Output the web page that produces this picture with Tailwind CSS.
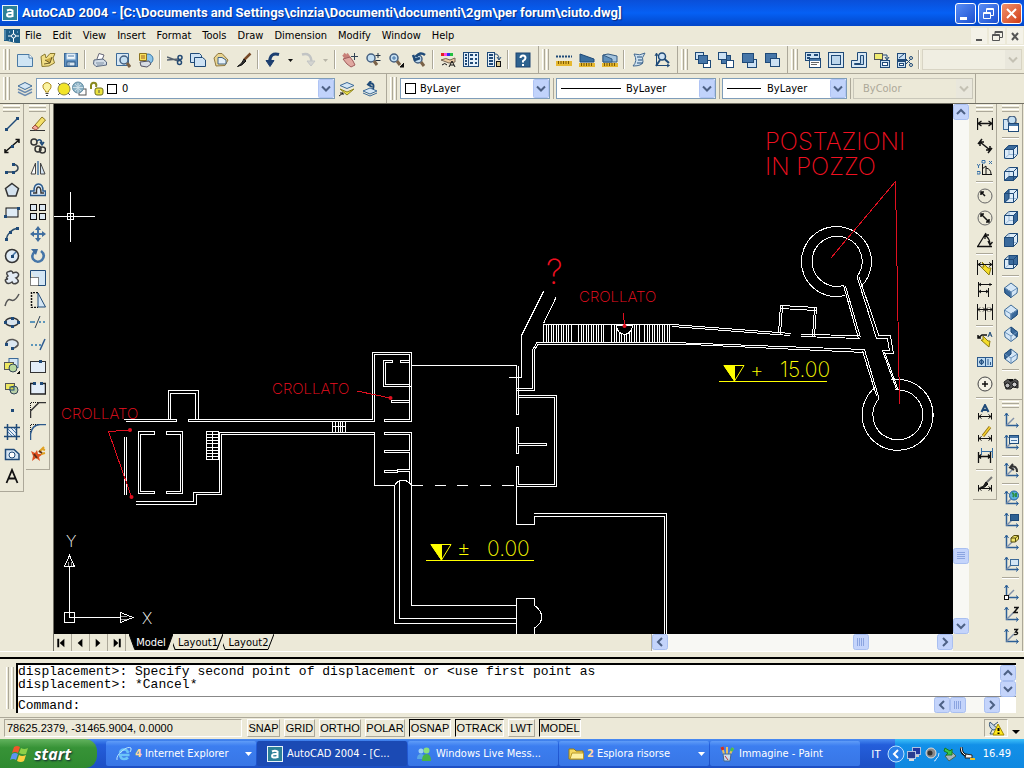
<!DOCTYPE html>
<html lang="en">
<head>
<meta charset="utf-8">
<title>AutoCAD 2004</title>
<script src="https://cdn.jsdelivr.net/npm/@tailwindcss/browser@4"></script>
</head>
<body class="h-screen overflow-hidden flex flex-col bg-[#ece9d8] text-black text-[11px] leading-4 font-['DejaVu_Sans_Condensed','DejaVu_Sans',sans-serif] cursor-default">

<!-- title bar -->
<header class="h-[26px] shrink-0 flex items-center pl-[2px] pr-[2px] bg-linear-to-b from-[#0a4fd8] via-[#0560f5] to-[#0346c8] text-white">
  <svg class="size-4 shrink-0" viewBox="0 0 16 16"><rect width="16" height="16" fill="#e8f4fa"/><rect x="1" y="1" width="14" height="14" fill="#2c8097"/><path d="M5 5.500Q8 4 10.500 5.500V12M10.500 8Q5 7.500 5 10T10.500 11" fill="none" stroke="#fff" stroke-width="2"/></svg>
  <h1 class="grow pl-1 font-bold text-[13px] whitespace-nowrap [text-shadow:1px_1px_1px_#0a2a80] font-[Roboto,sans-serif]" id="title">AutoCAD 2004 - [C:\Documents and Settings\cinzia\Documenti\documenti\2gm\per forum\ciuto.dwg]</h1>
  <div class="flex gap-[2px]">
    <button aria-label="Minimize" class="w-[21px] h-[21px] rounded-[3px] border border-white bg-linear-to-br from-[#5a8df5] to-[#1c4fd0]"><svg class="size-full" viewBox="0 0 19 19"><rect x="4" y="13" width="7" height="3" fill="#fff"/></svg></button>
    <button aria-label="Restore" class="w-[21px] h-[21px] rounded-[3px] border border-white bg-linear-to-br from-[#5a8df5] to-[#1c4fd0]"><svg class="size-full" viewBox="0 0 19 19" fill="none" stroke="#fff"><path d="M7.500 8V4.500H14.500V11.500H12M7 5.500H15"/><path d="M4.500 8.500H11.500V14.500H4.500ZM4 9.500H12"/></svg></button>
    <button aria-label="Close" class="w-[21px] h-[21px] rounded-[3px] border border-white bg-linear-to-br from-[#f0906a] to-[#d03a10]"><svg class="size-full" viewBox="0 0 19 19"><path d="M5 5L14 14M14 5L5 14" stroke="#fff" stroke-width="2"/></svg></button>
  </div>
</header>

<!-- menu bar -->
<nav class="h-[19px] shrink-0 flex items-center pl-1">
  <svg class="size-4 shrink-0 mr-[1px]" viewBox="0 0 16 16"><path d="M0 1H3V13H0ZM3 1H16V15L12 15L3 13Z" fill="#1d5c86"/><path d="M9.500 2V14M4 8H15" stroke="#fff"/><circle cx="9.500" cy="8" r="2" fill="#1d5c86" stroke="#fff"/><path d="M5 4H6M13 4H14M5 12H6" stroke="#9fd0f0"/><path d="M1 2V12" stroke="#7fb0d0"/></svg>
  <div class="flex gap-[3px] grow">
    <button class="px-1">File</button><button class="px-1">Edit</button><button class="px-1">View</button><button class="px-1">Insert</button><button class="px-1">Format</button><button class="px-1">Tools</button><button class="px-1">Draw</button><button class="px-1">Dimension</button><button class="px-1">Modify</button><button class="px-1">Window</button><button class="px-1">Help</button>
  </div>
  <div class="flex gap-[2px] pr-[1px]">
    <button aria-label="Minimize drawing" class="w-4 h-4 bg-[#f4f2e8]"><svg viewBox="0 0 16 16"><path d="M5 12H11" stroke="#555" stroke-width="2"/></svg></button>
    <button aria-label="Restore drawing" class="w-4 h-4 bg-[#f4f2e8]"><svg viewBox="0 0 16 16" fill="none" stroke="#555"><path d="M6 6.500V3.500H13.500V9.500H11M6 4.500H13M3.500 6.500H10.500V12.500H3.500ZM3 7.500H11"/></svg></button>
    <button aria-label="Close drawing" class="w-4 h-4 bg-[#f4f2e8]"><svg viewBox="0 0 16 16"><path d="M5 5L11 12M11 5L5 12" stroke="#555" stroke-width="2"/></svg></button>
  </div>
</nav>

<!-- toolbar row 1 -->
<div class="h-[28px] shrink-0 flex items-stretch border-t border-white">
  <div data-bar="h" data-icons="new open save | print preview publish | cut copy paste match | undo dd redo ddg | pan zoomrt zoomwin zoomprev | props dcenter palettes | help"></div>
  <div data-bar="h" data-icons="dist area mass | list locate"></div>
  <div data-bar="h" data-icons="front back above under"></div>
  <div data-bar="g" data-icons="vpdlg vpone vppoly vpobj vpclip |"></div>
  <label class="relative flex items-center grow pr-[2px]"><select disabled aria-label="Viewport scale" class="appearance-none w-full h-[21px] border border-[#d8d4c4] bg-[#f0eee2]"><option></option></select>
    <svg class="absolute right-[3px] w-4 h-[19px] pointer-events-none" viewBox="0 0 16 19"><rect width="16" height="19" fill="#e9e7dc"/><path d="M4 7.500L8 11.500L12 7.500" fill="none" stroke="#c4c1b4" stroke-width="2"/></svg></label>
</div>

<!-- toolbar row 2 -->
<div class="h-[30px] shrink-0 flex items-stretch border-t border-[#aca899]">
  <div data-bar="g" data-icons="layers"></div>
  <label class="relative flex items-center w-[299px]">
    <select aria-label="Layer" class="appearance-none w-full h-[21px] pl-[85px] border border-[#7f9db9] bg-white"><option>0</option></select>
    <svg class="absolute left-[3px] w-[80px] h-4 pointer-events-none" viewBox="0 0 80 16"><g fill="none"><path d="M6.500 11V10Q3 7 4 4Q8 -1 12 4Q13 7 9.500 10V11Z" fill="#fbf3a0" stroke="#b09020"/><path d="M6.500 12.500H9.500M7 14.500H9" stroke="#444"/><circle cx="25" cy="8" r="6" fill="#f2e428" stroke="#908a40"/><path d="M19 2L21 4M31 2L29 4M19 14L21 12M31 14L29 12" stroke="#555"/><rect x="40" y="8" width="7" height="6" fill="#fff" stroke="#555"/><circle cx="39" cy="6.500" r="5.500" fill="#8ab0c4" stroke="#6890a4"/><path d="M34 6.500H44M39 2V12M36 3L42 10M42 3L36 10" stroke="#cfe0e8"/><path d="M52 8V4Q53 1 56 2Q58 3 57 6" stroke="#8a8a20" stroke-width="2"/><rect x="56" y="7" width="8" height="7" rx="2" fill="#ece440" stroke="#6c6c20"/><path d="M60 9V12" stroke="#555"/></g><rect x="68.500" y="3.500" width="9" height="9" fill="#fff" stroke="#000"/></svg>
    <svg class="absolute right-[1px] w-4 h-[19px] pointer-events-none" viewBox="0 0 16 19"><rect x=".5" y=".5" width="15" height="18" rx="1" fill="#c1d3fb" stroke="#b0c4f4"/><path d="M4 7.500L8 11.500L12 7.500" fill="none" stroke="#4d6185" stroke-width="2"/></svg>
  </label>
  <div data-bar="n" data-icons="laycur layprev"></div>
  <div data-bar="g" data-icons=""></div>
  <label class="relative flex items-center w-[150px]">
    <select aria-label="Color" class="appearance-none w-full h-[21px] pl-[19px] border border-[#7f9db9] bg-white"><option>ByLayer</option></select>
    <svg class="absolute left-[5px] size-[11px] pointer-events-none" viewBox="0 0 11 11"><rect x=".5" y=".5" width="10" height="10" fill="#fff" stroke="#000"/></svg>
    <svg class="absolute right-[1px] w-4 h-[19px] pointer-events-none" viewBox="0 0 16 19"><rect x=".5" y=".5" width="15" height="18" rx="1" fill="#c1d3fb" stroke="#b0c4f4"/><path d="M4 7.500L8 11.500L12 7.500" fill="none" stroke="#4d6185" stroke-width="2"/></svg>
  </label>
  <div class="w-[6px] flex justify-center py-1"><span class="border-l border-[#aca899]"></span></div>
  <label class="relative flex items-center w-[160px]">
    <select aria-label="Linetype" class="appearance-none w-full h-[21px] pl-[69px] border border-[#7f9db9] bg-white"><option>ByLayer</option></select>
    <span class="absolute left-[5px] w-[60px] border-t border-black pointer-events-none"></span>
    <svg class="absolute right-[1px] w-4 h-[19px] pointer-events-none" viewBox="0 0 16 19"><rect x=".5" y=".5" width="15" height="18" rx="1" fill="#c1d3fb" stroke="#b0c4f4"/><path d="M4 7.500L8 11.500L12 7.500" fill="none" stroke="#4d6185" stroke-width="2"/></svg>
  </label>
  <div class="w-[6px] flex justify-center py-1"><span class="border-l border-[#aca899]"></span></div>
  <label class="relative flex items-center w-[125px]">
    <select aria-label="Lineweight" class="appearance-none w-full h-[21px] pl-[44px] border border-[#7f9db9] bg-white"><option>ByLayer</option></select>
    <span class="absolute left-[5px] w-[34px] border-t border-black pointer-events-none"></span>
    <svg class="absolute right-[1px] w-4 h-[19px] pointer-events-none" viewBox="0 0 16 19"><rect x=".5" y=".5" width="15" height="18" rx="1" fill="#c1d3fb" stroke="#b0c4f4"/><path d="M4 7.500L8 11.500L12 7.500" fill="none" stroke="#4d6185" stroke-width="2"/></svg>
  </label>
  <div class="w-[6px] flex justify-center py-1"><span class="border-l border-[#aca899]"></span></div>
  <label class="relative flex items-center w-[120px]">
    <select disabled aria-label="Plot style" class="appearance-none w-full h-[21px] pl-[9px] border border-[#c9c7ba] bg-[#ece9d8] text-[#aca899]"><option>ByColor</option></select>
    <svg class="absolute right-[1px] w-4 h-[19px] pointer-events-none" viewBox="0 0 16 19"><rect width="16" height="19" fill="#e9e7dc"/><path d="M4 7.500L8 11.500L12 7.500" fill="none" stroke="#c4c1b4" stroke-width="2"/></svg>
  </label>
  <div class="w-[3px] border-r border-[#aca899]"></div>
</div>

<!-- work area -->
<main class="flex grow min-h-0 border-t border-[#716f64]">
  <div class="flex items-start gap-[2px] w-[53px] shrink-0">
    <div data-bar="v" data-icons="line xline pline polygon rect arc circle cloud spline ellipse earc insert block point hatch region mtext"></div>
    <div data-bar="v" data-icons="erase copyob mirror offset array move rotate scale stretch trim extend breakp break chamfer fillet explode"></div>
  </div>
  <section class="grow min-w-0 flex flex-col border-l border-[#716f64]">
    <div class="flex grow min-h-0">
      <div class="grow min-w-0 bg-black">
        <svg id="drawing" class="block w-full h-full" viewBox="54 104 899 530" role="img" aria-label="Drawing area">
          <g fill="none" stroke="#fff" shape-rendering="crispEdges">
            <!-- west wing -->
            <path d="M168.500 419.500V390.500H198.500V419.500M170.500 419.500V393.500H195.500V419.500M124 419.500H176.500V421.500H126"/>
            <path d="M188.500 419.500H372.500V352.500H411.500V421.500H384.500V419.500H409.500V354.500H374.500V421.500H188.500Z"/>
            <path d="M374.500 432.500H219.500V492.500H193.500V501.500H136M374.500 434.500H221.500V494.500H196.500V504.500H136"/>
            <path d="M154.500 431.500H138.500V493.500H154.500V491.500H140.500V434.500H154.500ZM166.500 431.500H182.500V493.500H166.500V491.500H180.500V434.500H166.500ZM124.500 437V495M126.500 437V495"/>
            <path d="M206.500 431.500H218.500V459.500H206.500ZM212.500 431V459M206 434.500H218M206 437.500H218M206 440.500H218M206 443.500H218M206 447.500H218M206 450.500H218M206 453.500H218M206 456.500H218"/>
            <path d="M332.500 421.500V432.500M335.500 421.500V432.500M338.500 421.500V432.500M340.500 421.500V432.500M342.500 421.500V432.500M345.500 421.500V432.500M332 426.500H346"/>
            <path d="M374.500 432.500V485.500H394.500M411.500 484.500V432.500H384.500V434.500H409.500V450.500H384.500V452.500H409.500V469.500H397.500V470.500H384.500V472.500H397.500V471.500H409.500V483.500"/>
            <path d="M392.500 362.500V360.500H383.500V386.500H411.500M392.500 362.500H385.500V384.500H409.500M409.500 360.500H400.500V362.500H409.500M409.500 400.500H391.500V402.500H409.500"/>
            <path d="M394.500 623.500V485.500Q398 480 403 480.500Q408 480 411.500 485.500V605.500H516.500M394.500 623.500H516.500M399.500 482V618.500H516.500"/>
            <!-- courtyard -->
            <path d="M411.500 365.500H516.500V414.500H518.500V365.500M411 485.500H423M435 485.500H446M457 485.500H468M480 485.500H491M502 485.500H514"/>
            <path d="M518.500 395.500H556.500V486.500H516.500M518.500 397.500H554.500V484.500H518.500V466.500H516.500V524.500H534.500V516.500H664.500V634M534 513.500H666.500V634M518.500 443.500V427.500H516.500V453.500H518.500V445.500H546.500V443.500H518.500"/>
            <path d="M509 377.500H521.500V335.500L543.500 291.500M556 297.500L543.500 323.500M516.500 388.500H532.500V350L537 342.500H672M516.500 390.500H534.500V350L538 344.500H690"/>
            <path d="M516.500 634V598.500H534.500V605.500Q541.500 610 541.500 617Q541.500 624 534.500 628V634"/>
            <!-- gallery -->
            <path d="M543 324.500H672L791.500 333.500M672 326.500L790 335.500M801.500 334.500L859 335.500M801.500 336.500L860 338.500M672 342.500L864.500 349.500M690 344.500L864.500 352.500"/>
            <path d="M543 333.500H573M578 333.500H606M611 333.500H640M644 333.500H672" stroke-width="18" stroke-dasharray="1 2 1 1"/>
            <path d="M616.500 325Q617 334 625 334.500Q632 333 632.500 325Z" fill="#000"/>
            <path d="M778.500 333.500L780.500 305.500L816.500 307.500L814.500 336.500M780.500 334L782.500 306M780.500 308.500L816 310.500M812.500 336L814.500 308"/>
            <!-- gun pits -->
            <path d="M861 286.500A35 35 0 1 0 845 295.500M857 276.500A25 25 0 1 0 843.500 285.500L858.500 338.500M845.500 286L860.500 337.500M857 276.500L876.500 338.500H887.500L889.500 350.500H882.500L896.500 389.500M859 277L879 335.500H890.500L893.500 353.500H883"/>
            <path d="M864.500 349.500L879 398.500M862.500 351L876.500 396M884.500 352L898 389.500M891 380A35.500 35.500 0 1 1 875 387.500M895.500 390A25 25 0 1 1 879 398.500"/>
            <!-- crosshair and UCS icon -->
            <path d="M54 216.500H95M70.500 192V242M67.500 213.500H73.500V219.500H67.500Z"/>
            <path d="M64.500 612.500H74.500V622.500H64.500ZM69.500 617.500V567M69.500 617.500H120M64.500 566.500H74.500L69.500 555.500ZM120.500 612.500V622.500L133 617.500Z"/>
            <path d="M68 562V566M71 562V566M121 616H127M121 619H127" stroke="#999"/>
          </g>
          <g fill="none" stroke="#e01020">
            <path d="M131 430L108.500 431.500L131.500 497M357 391L390 398M623.500 313L624.500 326M830.500 258.500L895.500 181.500L899.500 404" shape-rendering="crispEdges"/>
            <g fill="#e01020" stroke="none"><circle cx="130" cy="430" r="2"/><circle cx="131.500" cy="497" r="2"/><circle cx="390.500" cy="398" r="2"/><circle cx="624.500" cy="326" r="2"/></g>
          </g>
          <g fill="#f01020" font-family="Inter, sans-serif" font-weight="200" font-size="15">
            <text x="61" y="419">CROLLATO</text><text x="272" y="394">CROLLATO</text><text x="579" y="302">CROLLATO</text>
            <text x="546" y="284" font-size="34">?</text>
            <text font-size="24"><tspan x="765" y="150">POSTAZIONI</tspan><tspan x="765" y="175">IN POZZO</tspan></text>
          </g>
          <g fill="#ff0" stroke="#ff0">
            <path d="M719 381.500H827M724 365.500H744L734.500 381L724 365.500M426 560.500H534M431 544.500H451L441.500 560L431 544.500" fill="none"/>
            <path d="M724 365.500H734.500V381ZM431 544.500H441.500V560Z"/>
            <g stroke="none" font-family="Inter, sans-serif" font-weight="200" font-size="21"><text x="750" y="377">+</text><text x="780" y="377">15.00</text><text x="457" y="556">±</text><text x="487" y="556">0.00</text></g>
          </g>
          <g fill="#fff" font-family="Inter, sans-serif" font-weight="200" font-size="16"><text x="142" y="624">X</text><text x="66" y="547">Y</text></g>
        </svg>
      </div>
      <div class="w-4 shrink-0 flex flex-col justify-between bg-[#f8f8f4]" role="scrollbar" aria-label="Vertical scroll">
        <button aria-label="Scroll up" data-arrow="up"></button>
        <div class="grow"></div>
        <span data-arrow="gripv"></span>
        <div class="h-[54px]"></div>
        <button aria-label="Scroll down" data-arrow="down"></button>
      </div>
    </div>
    <div class="h-[17px] shrink-0 flex items-stretch">
      <button aria-label="First tab" class="w-[18px] border-r border-[#aca899]"><svg viewBox="0 0 18 16"><path d="M4.500 4V13" stroke="#000" stroke-width="2"/><path d="M11 4V13L6 8.500Z"/></svg></button>
      <button aria-label="Previous tab" class="w-[18px] border-r border-[#aca899]"><svg viewBox="0 0 18 16"><path d="M11 4V13L6 8.500Z"/></svg></button>
      <button aria-label="Next tab" class="w-[18px] border-r border-[#aca899]"><svg viewBox="0 0 18 16"><path d="M6 4V13L11 8.500Z"/></svg></button>
      <button aria-label="Last tab" class="w-[18px] border-r border-[#aca899]"><svg viewBox="0 0 18 16"><path d="M12.500 4V13" stroke="#000" stroke-width="2"/><path d="M6 4V13L11 8.500Z"/></svg></button>
      <div class="w-[3px]"></div>
      <button class="relative w-[44px] text-white"><svg class="absolute inset-0 size-full" viewBox="0 0 46 17" preserveAspectRatio="none"><path d="M0 0H46L40 15.500H6Z" stroke="#000"/></svg><span class="relative">Model</span></button>
      <button class="relative w-[50px]"><svg class="absolute inset-0 size-full" viewBox="0 0 49 17" preserveAspectRatio="none"><path d="M-2 5L2 15.500H43L49 0" fill="none" stroke="#000"/></svg><span class="relative">Layout1</span></button>
      <button class="relative w-[51px]"><svg class="absolute inset-0 size-full" viewBox="0 0 51 17" preserveAspectRatio="none"><path d="M-2 5L2 15.500H45L51 0" fill="none" stroke="#000"/></svg><span class="relative">Layout2</span></button>
      <div class="grow"></div>
      <div class="w-[302px] flex bg-[#f8f8f4] border-l border-[#aca899]" role="scrollbar" aria-label="Horizontal scroll">
        <button aria-label="Scroll left" data-arrow="left"></button>
        <div class="grow"></div>
        <span data-arrow="griph"></span>
        <div class="w-[68px]"></div>
        <button aria-label="Scroll right" data-arrow="right"></button>
      </div>
      <div class="w-4 shrink-0"></div>
    </div>
  </section>
  <div class="flex items-start gap-[2px] pl-1 pr-[1px] shrink-0">
    <div data-bar="v" data-icons="dlin dalign dord | drad ddia dang | qdim dbase dcont | qleader tol center | dedit dtedit dupd | dstyle"></div>
    <div>
      <div data-bar="v" data-icons="nview | cbtop cbbot cbleft cbright cbfront cbback | isw ise ine inw | camera"></div>
      <div data-bar="v" data-icons="ucs ucsdlg | ucsprev | ucsworld ucsobj ucsface ucsview | ucsorg ucsz ucs3"></div>
    </div>
  </div>
</main>

<!-- command window -->
<section class="h-[66px] shrink-0 flex flex-col border-t border-white">
  <div class="h-[7px] border-b-2 border-black"></div>
  <div class="grow min-h-0 flex pt-1 pb-1 pr-2">
    <div class="w-[16px] shrink-0 flex gap-[2px] pl-[6px] py-1"><span class="w-[3px] border-l border-white border-r border-r-[#aca899]"></span><span class="w-[3px] border-l border-white border-r border-r-[#aca899]"></span></div>
    <div class="grow min-w-0 flex flex-col bg-white border-t-2 border-l-2 border-t-black border-l-black font-['Liberation_Mono',monospace] text-[13px] leading-[13px]">
      <div class="flex h-[32px] border-b border-[#888]">
        <div class="grow whitespace-pre">displacement>: Specify second point of displacement or &lt;use first point as
displacement>: *Cancel*</div>
        <div class="flex flex-col w-4"><button aria-label="History up" data-arrow="up"></button><button aria-label="History down" data-arrow="down"></button></div>
      </div>
      <div class="flex grow items-center">
        <label for="cmd">Command:</label><input id="cmd" class="grow min-w-0 h-4 outline-none">
        <div class="flex w-[66px] bg-[#f8f8f4] mr-4"><button aria-label="Command left" data-arrow="left"></button><span data-arrow="griph"></span><div class="grow"></div><button aria-label="Command right" data-arrow="right"></button></div>
      </div>
    </div>
  </div>
</section>

<!-- status bar -->
<section class="h-[22px] shrink-0 flex items-center gap-1 pl-1 pr-1 pb-[1px] border-t border-[#aca899] font-['Liberation_Sans',sans-serif]">
  <output class="w-[238px] h-[18px] pl-[2px] mr-[1px] border border-[#aca899] border-b-white border-r-white">78625.2379, -31465.9004, 0.0000</output>
  <button class="w-[33px] h-[18px] border border-white border-r-[#aca899] border-b-[#aca899]">SNAP</button>
  <button class="w-[31px] h-[18px] border border-white border-r-[#aca899] border-b-[#aca899]">GRID</button>
  <button class="w-[42px] h-[18px] border border-white border-r-[#aca899] border-b-[#aca899]">ORTHO</button>
  <button class="w-[40px] h-[18px] border border-white border-r-[#aca899] border-b-[#aca899]">POLAR</button>
  <button aria-pressed="true" class="w-[42px] h-[18px] border border-white border-t-black border-l-black">OSNAP</button>
  <button aria-pressed="true" class="w-[49px] h-[18px] border border-white border-t-black border-l-black">OTRACK</button>
  <button class="w-[27px] h-[18px] border border-white border-r-[#aca899] border-b-[#aca899]">LWT</button>
  <button aria-pressed="true" class="w-[42px] h-[18px] border border-white border-t-black border-l-black">MODEL</button>
  <div class="grow"></div>
  <button aria-label="Communication center" class="w-[24px] h-[18px] border border-[#aca899] border-b-white border-r-white"><svg viewBox="0 0 22 16"><path d="M5 2L13 9L8 10Q3 7 5 2Z" fill="#c4d4e4" stroke="#385878"/><path d="M9 5L13 2M7 10L5 14H11" stroke="#385878" fill="none"/><path d="M13 4L19 15H8Z" fill="#ffe81a" stroke="#a08a00"/><path d="M13.500 8V11M13.500 12.500V14" stroke="#000" stroke-width="2"/></svg></button>
  <button aria-label="Status menu" class="w-[8px] h-[18px]"><svg viewBox="0 0 8 18"><path d="M0 11H8L4 15Z"/></svg></button>
</section>

<!-- taskbar -->
<footer class="h-[29px] shrink-0 flex items-stretch bg-linear-to-b from-[#4a8cf2] via-[#245edb] via-20% to-[#1d4fc4] text-white">
  <button class="w-[97px] mr-[9px] flex items-center pl-[10px] gap-1 rounded-r-xl bg-linear-to-b from-[#62b35e] via-[#379337] via-30% to-[#2f8a30] font-bold italic text-[16px] [text-shadow:1px_1px_2px_#123] font-['Open_Sans',sans-serif]">
    <svg class="w-[20px] h-[18px]" viewBox="0 0 20 18"><path d="M4 2Q7 0 10 2L8 8Q5 6 2 8Z" fill="#f0562a"/><path d="M11 3Q14 5 18 3L16 9Q13 10 9 8Z" fill="#8bd048"/><path d="M2 9Q5 7 8 9L6 15Q3 13 0 15Z" fill="#5c94f0"/><path d="M9 10Q12 12 16 10L14 16Q11 18 7 16Z" fill="#fad040"/></svg>start</button>
  <div class="flex grow gap-[1px] py-[2px]">
    <button class="w-[150px] flex items-center gap-[3px] pl-[10px] pr-1 rounded-xs bg-linear-to-b from-[#5f9cf8] via-[#3c7ef0] via-20% to-[#3876e6]"><svg class="size-4" viewBox="0 0 16 16"><path d="M13.500 9H4Q4.500 13 8 13Q10.500 13 12 11.500M4 7Q4.500 3.500 8 3.500T12 7" fill="none" stroke="#6cc4f8" stroke-width="2.500"/><path d="M1 14Q0 10 6 5T15 2Q15.500 4 14 6" fill="none" stroke="#b8e4ff"/></svg><span class="font-bold text-[#ffd9a0]">4</span><span class="grow text-left">Internet Explorer</span><svg class="w-[7px]" viewBox="0 0 7 4"><path d="M0 0H7L3.500 4Z" fill="#fff"/></svg></button>
    <button class="w-[150px] flex items-center gap-[4px] pl-[10px] pr-1 rounded-xs bg-[#1b4ab4]"><svg class="size-4" viewBox="0 0 16 16"><rect width="16" height="16" fill="#e8f4fa"/><rect x="1" y="1" width="14" height="14" fill="#2c8097"/><path d="M5 5.500Q8 4 10.500 5.500V12M10.500 8Q5 7.500 5 10T10.500 11" fill="none" stroke="#fff" stroke-width="2"/></svg><span>AutoCAD 2004 - [C...</span></button>
    <button class="w-[150px] flex items-center gap-[4px] pl-[8px] pr-1 rounded-xs bg-linear-to-b from-[#5f9cf8] via-[#3c7ef0] via-20% to-[#3876e6]"><svg class="size-4" viewBox="0 0 16 16"><circle cx="5" cy="5" r="2.500" fill="#9cd0f4"/><path d="M1 13Q1 8 5 8T9 13Z" fill="#5aa8e4"/><circle cx="10.500" cy="4.500" r="3" fill="#8be07c"/><path d="M6 15Q6 8 10.500 8T15 15Z" fill="#48b448"/></svg><span>Windows Live Mess...</span></button>
    <button class="w-[150px] flex items-center gap-[3px] pl-[9px] pr-1 rounded-xs bg-linear-to-b from-[#5f9cf8] via-[#3c7ef0] via-20% to-[#3876e6]"><svg class="size-4" viewBox="0 0 16 16"><path d="M1 13V3H6L8 5H15V13Z" fill="#f4d860" stroke="#9a7c10"/><path d="M2 13L4 7H15.500V13Z" fill="#fdf0a0" stroke="#b89828"/></svg><span class="font-bold text-[#ffd9a0]">2</span><span class="grow text-left">Esplora risorse</span><svg class="w-[7px]" viewBox="0 0 7 4"><path d="M0 0H7L3.500 4Z" fill="#fff"/></svg></button>
    <button class="w-[150px] flex items-center gap-[4px] pl-[9px] pr-1 rounded-xs bg-linear-to-b from-[#5f9cf8] via-[#3c7ef0] via-20% to-[#3876e6]"><svg class="size-4" viewBox="0 0 16 16"><path d="M5 8L3 1M8 8V1M11 8L14 2" stroke="#e8c060" stroke-width="2"/><path d="M3 1L4 4" stroke="#d03020" stroke-width="3"/><path d="M14 2L12 5" stroke="#4ac04a" stroke-width="3"/><path d="M4 8H12L11 15H5Z" fill="#c8dcec" stroke="#486888"/><path d="M6 10L9 14" stroke="#c03030"/></svg><span>Immagine - Paint</span></button>
  </div>
  <span class="self-center pr-[14px] font-['Liberation_Sans',sans-serif]">IT</span>
  <div class="relative w-[129px] flex items-center gap-[2px] pl-[17px] pr-[13px] bg-linear-to-b from-[#3cc0f8] via-[#1290e8] via-20% to-[#0f88e0]">
    <button aria-label="Show hidden icons" class="absolute -left-2 size-[18px]"><svg viewBox="0 0 18 18"><circle cx="9" cy="9" r="8" fill="#2a80e8" stroke="#bfe4ff"/><path d="M11 5L7 9L11 13" fill="none" stroke="#fff" stroke-width="2"/></svg></button>
    <svg class="size-4 -ml-[6px]" viewBox="0 0 16 16"><rect x="6.500" y="1.500" width="8" height="7" fill="#2038a0" stroke="#b0c0e0"/><path d="M9 10H13" stroke="#ccc" stroke-width="2"/><rect x="1.500" y="5.500" width="8" height="7" fill="#283c90" stroke="#b0c0e0"/><path d="M3 14H8" stroke="#ddd" stroke-width="2"/></svg>
    <svg class="size-4" viewBox="0 0 16 16"><circle cx="7" cy="7" r="5" fill="#888" stroke="#ddd"/><circle cx="6" cy="7" r="2.500" fill="#333"/><path d="M12 13Q15 11 15 7M10 15Q12 15 12 13" fill="none" stroke="#cce8ff"/></svg>
    <svg class="size-4" viewBox="0 0 16 16"><path d="M3 10L10 6L14 10L7 15Z" fill="#a8b4b8" stroke="#465"/><path d="M3 2L8 5L10 3V9H4L6 7L2 5Z" fill="#38c848" stroke="#187820"/></svg>
    <svg class="size-4" viewBox="0 0 16 16"><path d="M1 1Q1 7 5 9L11 11" fill="none" stroke="#111" stroke-width="3"/><path d="M1 1Q1 7 5 9L11 11" fill="none" stroke="#eee"/><path d="M6 8L12 9V12L5 12Z" fill="#f4f4f4" stroke="#222"/><path d="M10 13H15" stroke="#f0c020" stroke-width="2"/></svg>
    <time class="grow text-right">16.49</time>
  </div>
</footer>

<script>
const N='#1f4a78', B='#4676a8', L='#cde2f4';
const p=(d,s,f,w)=>`<path d="${d}" stroke="${s||N}" fill="${f||'none'}" stroke-width="${w||1}"/>`;
const r=(x,y,w,h,s,f)=>`<rect x="${x}" y="${y}" width="${w}" height="${h}" stroke="${s||N}" fill="${f||L}"/>`;
const c=(x,y,q,s,f,w)=>`<circle cx="${x}" cy="${y}" r="${q}" stroke="${s||N}" fill="${f||'none'}" stroke-width="${w||1}"/>`;
const dot=(x,y)=>`<rect x="${x-1}" y="${y-1}" width="3" height="3" fill="${N}" stroke="none"/>`;
const K='#111';
const cube=(face)=>p('M1.500 5.500L6 1.500H14.500V10.500L10.500 14.500H1.500Z',N,'#dcebf8')+p('M6 1.500V10.500H14.500M6 10.500L1.500 14.500','#9dbbd8')+p(face,N,'#3a6a9c')+p('M1.500 5.500H10.500V14.500M10.500 5.500L14.500 1.500',N);
const iso=(face)=>p('M8 1L14.500 6L14 11L8 15.500L2 11L1.500 6Z','#3f6c98','#d4e6f6')+p(face,N,'#3a6a9c')+p('M1.500 6L8 10L14.500 6M8 10V15','#6c94bc');
const axes=(x)=>p('M3.500 1.500V13.500H15','#2c5f96',0,1.500)+p('M3.500 13.500L11 6','#8090a8',0,1.500)+p('M1.500 4L3.500 1L5.500 4M13 11.500L15.500 13.500L13 15.500','#2c5f96')+(x||'');
const ticks=p('M1.500 9V15.500M14.500 9V15.500',K)+p('M1.500 12.500H14.500M4.500 10.500L2 12.500L4.500 14.500M11.500 10.500L14 12.500L11.500 14.500',K);
const lens=(x,y)=>c(x,y,4,'#456080','#c4dff2',1.500)+p(`M${x+3} ${y+3}L${x+6} ${y+7}`,'#7a6248',0,3);
const I={
new:p('M.5 2.500H12L15.500 6V14.500H.5Z','#4a7aa4','#cfe5f4')+p('M12 2.500V6H15.500','#4a7aa4','#fff'),
open:p('M2 14.500L1 4.500L5 2L6 6L10 1.500L15 1.500L13 6L14.500 11L9 14Z','#8a7a30','#f0dd84')+p('M5 8L10 11L12 5M10 11L4 12','#6b5c28','#c8a840'),
save:r(1.500,1.500,13,13,'#3c6a98','#5f90c0')+r(4,2,8,5,'#cfe2f2','#f6fafc')+r(4,10,8,4,'#2c5884','#dbe8f2')+p('M5 4H11M6 11V14',B),
print:p('M5 7L7 1.500L12 3L10 8','#667','#fff')+p('M2 8L11 7L14.500 10V13L4 14.500L1.500 12Z','#56647c','#d2dce6')+p('M4 11H12M5 13H11','#7f90a4'),
preview:p('M1.500 1.500H13.500V13.500H1.500Z','#3c6a98','#d8e8f4')+lens(9,8),
publish:c(10,7,5,'#3878a8','#8cc4e8')+p('M1.500 1.500H8.500V8.500H1.500Z','#8c7420','#f8e05c')+p('M2 10L11 9L13 12L9 15L3 14Z','#556','#d8dde4')+p('M3 4H7M3 6H7','#a06020'),
cut:p('M0 5L11 9M0 8L12 7','#556270',0,1.500)+c(13,5.500,2,'#234a74',0,1.500)+c(12.500,10.500,2,'#234a74',0,1.500),
copy:p('M.5 1.500H9.500L11.500 3.500V10.500H.5Z',N,L)+p('M4.500 5.500H12.500L15.500 8V14.500H4.500Z',N,L),
paste:p('M1 6L5 1.500H9L15 8L12 13.500L3 14Z','#907840','#e8d490')+p('M5 5.500H9L13 8V12H5Z','#456484','#e4f0f8'),
match:p('M14.500 1.500L8 8','#774a28',0,2.500)+p('M8 7L10 9Q6 14 1.500 14.500Q6 12 8 7Z',K,'#333'),
undo:p('M14 2.500Q5 0 4.500 10','#1d3f70',0,3)+p('M1 8.500H9L5 14.500Z','#1d3f70','#1d3f70'),
redo:p('M2 2.500Q11 0 11.500 10','#c2c4c4',0,2.500)+p('M7 9H15L11 14Z','#c2c4c4','#d4d4d0'),
pan:p('M1 3L4 7M2 1.500L6 6M5 1.500L8 6','#c88078',0,2)+p('M1 7L8 5L11 9L13 13L9 15L5 12Z','#a05c5c','#e0a8a0')+p('M12.500 1V8M9 4.500H16','#345'),
zoomrt:lens(6,6)+p('M13 1V6M10.500 3.500H15.500M10.500 8.500H15.500','#234'),
zoomwin:lens(6,6)+p('M4 6H8M6 4V8',B)+p('M12 15H16V11Z',K,K),
zoomprev:lens(7,7)+p('M14 3Q9 -1 5 5M2 3L4 8L9 6',N,0,2.500),
props:r(1,1,3,3,'none','#e02020')+r(4,1,3,3,'none','#ff40e0')+r(7,1,3,3,'none','#3030f0')+r(10,1,3,3,'none','#20c040')+p('M1 8Q6 5 10 8L15 6V10L9 11Z','#765','#e8c8a0')+p('M9 15L12 9L15 15M10 13H14M2 13Q5 10 7 13',K),
dcenter:r(.5,.5,15,14,N,'#e4f0fa')+p('M5.500 1V14',N)+p('M2 3H4M2 6H4M2 9H4M2 12H4M7 3H10M12 3H14M7 7H10M12 7H14M7 11H10M12 11H14',N,0,2),
palettes:r(1.500,.5,7,14,N,'#e4f0fa')+p('M3 3H7M3 6H7M3 9H7M3 12H7',N,0,2)+p('M9 2Q13 2 13 7M11 5L13 8L15 5',N)+r(10.500,9.500,4,5,K,'#d8c890'),
help:r(1,1,14,14,'#1c4570','#2d628f')+p('M5.500 6Q5.500 3.500 8 3.500T10.500 6Q10.500 7.500 8 9V10.500M8 12V14','#fff',0,2),
dist:p('M0 4.500H16',N,0,2).replace('/>',' stroke-dasharray="2 1"/>')+r(0,9,16,5,'none','#e6b830')+p('M2.500 9V12M5 9V12M7.500 9V12M10 9V12M12.500 9V12','#7a5800'),
area:p('M1 10V2L15 7V10Z',N,'#3b6f9e')+r(0,11,16,4,'none','#e6b830')+p('M2.500 11V14M5 11V14M7.500 11V14M10 11V14M12.500 11V14','#7a5800'),
mass:p('M1 10V3L6 2L15 4V10Z','#345a80','#a4c4de')+p('M1 10V3L10 7V10Z','#345a80','#5f90bc')+r(0,11,16,4,'none','#e6b830')+p('M2.500 11V14M5 11V14M7.500 11V14M10 11V14M12.500 11V14','#7a5800'),
list:p('M3 2Q9 4 14 1Q10 6 12 10Q11 14 2 14Q7 9 3 2Z','#456a90','#cfe2f0')+p('M6 5H11M7 8H11M6 11H12',N),
locate:p('M2.500 2V13.500H15M1 4L2.500 1L4 4M13 12L15.500 13.500L13 15',N)+c(8,4.500,3.500,N,L,1.500)+p('M10.500 7L15 11M2 14L6 8',N,0,2),
front:r(.5,.5,8,7)+r(8.500,8.500,7,7,N,'#fff')+r(3.500,3.500,9,8,N,B),
back:r(3.500,3.500,9,8,N,B)+r(.5,.5,8,7)+r(8.500,8.500,7,7,N,'#fff'),
above:r(6.500,7.500,9,8)+r(1.500,1.500,11,9,N,B),
under:r(1.500,1.500,11,9,N,B)+r(6.500,6.500,9,8),
vpdlg:r(.5,.5,14,8)+p('M2 3H6M9 3H13M2 6H5',N,0,2)+r(4.500,6.500,11,9,N,'#fff')+p('M5 8H15',B,0,2)+p('M6 10.500H14M6 12.500H12','#666'),
vpone:r(.5,.5,15,15,N,'#d8e8f4')+r(3.500,3.500,9,9,N,'#bcd6ec'),
vppoly:p('M.5 8.500H6.500V.5H15.500V15.500H.5Z',N,'#d8e8f4')+p('M3.500 11.500H9.500V3.500H12.500V12.500H3.500Z',N,'#bcd6ec'),
vpobj:r(.5,1.500,8,6,'#555','#f0ec70')+p('M9 3H13V7M11 5L13 8L15 5',N)+r(6.500,8.500,9,7)+r(8.500,10.500,5,3,N,'#fff'),
vpclip:r(.5,1.500,8,6)+r(.5,9.500,8,6)+r(2.500,11.500,4,2,N,'#fff')+p('M0 8.500H10M2 6L7 2M9 7L14 12M9 12L14 7',N)+c(14,6,1.500)+c(14,13,1.500),
layers:p('M8 1.500L15 5L8 8.500L1 5Z','#3c6a98','#d4e6f4')+p('M1 8L8 11.500L15 8M1 11L8 14.500L15 11','#6c8cb0',0,1.500),
laycur:p('M8 1.500L15 4.500L8 7.500L1 4.500Z','#3c6a98','#d4e6f4')+p('M1 8L8 11L15 8L8 14Z','#8c8420','#f0e448')+p('M0 15L4 12M1 12H4V14',K),
layprev:p('M8 7L15 10L8 13L1 10Z','#3c6a98','#d4e6f4')+p('M1 12L8 15L15 12','#3c6a98')+p('M11 8Q13 1 7 3M9 0L6 3.500L10 6',N,0,2),
line:p('M2 14L14 2',N,0,1.500)+dot(2,13)+dot(13,2),
xline:p('M1 14L15 2M1 11V14.500H4.500M11.500 1.500H15V5',K,0,1.500)+dot(8,8),
pline:p('M2 12H10Q14 11 14 8T9 4','#345',0,1.500)+dot(2,12)+dot(9,12)+dot(9,4),
polygon:p('M8 1.500L14.500 6.500L12 14H4L1.500 6.500Z','#333','#d4e2ee',1.500),
rect:r(2,4,12,9,K,'#e0ecf6')+dot(1,12)+dot(14,4),
arc:p('M2 14Q4 4 14 2','#2c5070',0,1.500)+dot(2,13)+dot(6,6)+dot(13,2),
circle:c(8,8,6.500,'#333','#e0ecf6',1.500)+p('M8 8L12 4',B,0,1.500)+dot(8,8),
cloud:p('M4 6Q1 2 5 1.500Q8 0 9 3Q13 1 14.500 4Q15 7 12 8Q16 11 13 13Q9 15 8 12Q4 15 2 12Q0 9 4 9Q1 8 4 6Z','#444','#e4ecf4',1.500),
spline:p('M1 14Q3 6 7 8T15 2','#555',0,1.500),
ellipse:`<ellipse cx="8" cy="8" rx="6.500" ry="4" fill="#d8e4ee" stroke="#333" stroke-width="1.500"/>`+dot(1,8)+dot(14,8)+dot(8,4)+dot(8,12),
earc:p('M2 7Q4 3 9 3.500Q15 5 14 9Q12 12 8 12','#555','#dce8f2',1.500)+dot(2,8)+dot(8,12),
insert:r(5,.5,9,9,'#3c6a98','#d4e6f4')+r(.5,4.500,9,7,'#555','#eee860')+c(9,10,4,'#345','#b8d8a0')+p('M13 16H16V13Z',K,K),
block:r(1.500,3.500,9,6,'#555','#eee860')+c(10,10,4,'#345','#b8d0a8')+r(6,7,4,3,N,'#d8d848'),
point:dot(8,8),
hatch:r(3.500,3.500,9,9,N,'#e8f0f8')+p('M0 3.500H16M0 12.500H16M3.500 0V16M12.500 0V16',N,0,1.500)+p('M4 8L8 12M4 5L11 12M7 4L12 9M10 4L12 6',B),
region:p('M1.500 13.500V3.500H10L15 8V13.500Z',N,'#d4e4f2',1.500)+c(8,9,3,N,'#fff'),
mtext:p('M2.500 15L8 2L13.500 15M4.500 10.500H11.500',K,0,1.800),
erase:p('M0 14.500H15','#333')+p('M5 9L12 1L15.500 4L8.500 12Z','#8a7420','#f4e068')+p('M5 9L8.500 12L6 14L2 12Z','#a05040','#f4a898'),
copyob:c(4,4,3,'#333',0,1.500)+c(8,11,3,'#333',0,1.500)+c(12.500,12,3,'#333',0,1.500)+p('M7 3Q11 0 12 5M10 4L12 7L14 4',N,0,1.500),
mirror:p('M5.500 3V14H1Z','#444','#fff')+p('M10.500 3V14H15Z','#444','#d4e4f2')+p('M8 1V15',B,0,1.500),
offset:p('M.5 13.500V9H4Q4 2 8.500 2T13 9H15.500V13.500Z','#2a5a8c','#e0eefa',1.500)+p('M3 11H6.500Q6 5 8.500 5T11 11H14','#333',0,1.500),
array:[[.5,.5],[9.5,.5],[.5,9.5],[9.5,9.5]].map(a=>r(a[0],a[1],6,6,K,'#dce8f2')).join(''),
move:p('M8 2V14M2 8H14',B,0,2)+p('M5 4L8 0L11 4ZM5 12L8 16L11 12ZM4 5L0 8L4 11ZM12 5L16 8L12 11Z','none','#3f6c9c'),
rotate:p('M5 3.500Q1 7 3 11Q7 16 12 12Q16 7 11 3',B,0,2.500)+p('M1 1L8 1L6 7Z','none','#3f6c9c'),
scale:p('M.5 .5H15.500V15.500H8',N,'#d4e6f4')+`<rect x=".5" y="7.500" width="8" height="8" fill="#fff" stroke="#111" stroke-dasharray="1 1"/><path d="M.5 8V.5" stroke="#1f4a78"/>`,
stretch:p('M8 1V15H15.500Z',N,'#d4e6f4')+`<path d="M8 .5H1.500V15.500H8" fill="none" stroke="#111" stroke-dasharray="2 1" stroke-width="1.500"/>`,
trim:p('M0 8H5M9 8H11M13 8H15','#2c7ab0',0,1.500)+p('M5 14L10 2','#345'),
extend:p('M1 9H3M5 9H7M9 9H11','#2c7ab0',0,1.500)+p('M10 14L15 3','#2c5a90',0,1.500),
breakp:r(.5,3.500,15,11,'#333','#e4eef8')+dot(10,3),
break:p('M4 3.500H.5V14H15.500V3.500H12','#222','#e4eef8',1.500)+dot(4,3)+dot(11,3),
chamfer:`<path d="M.5 8V.5H8" stroke="#111" fill="none" stroke-dasharray="1 1"/>`+p('M.5 16V9L9 .5H16','#333',0,1.500),
fillet:`<path d="M.5 8V.5H8" stroke="#111" fill="none" stroke-dasharray="1 1"/>`+p('M.5 16V10Q2 1 10 .5H16','#2c5a8c',0,1.500),
explode:p('M1 5L5 7L7 4L8 8L13 8L9 11L10 15L6 12L2 15L3 10Z','none','#e05020')+p('M9 6L14 1M11 8L15 7M12 3L15 4','#e0a020',0,2)+p('M4 8L7 12M9 5L12 7','#603018',0,2),
dlin:p('M.5 2V14M15.500 2V14M.5 7.500H15.500M4.500 5L1 7.500L4.500 10M11.500 5L15 7.500L11.500 10',K,0,1.300),
dalign:p('M1 6L5 1M11 15L15 10M3 4L13 12M3 8V4H7M13 8V12H9',K,0,1.500),
dord:p('M5.500 4V14.500M5 14.500H15M5 9L9 6V14M9 8Q14 9 14 14',K)+p('M0 4L1.500 6L3 4M1.500 6V8M0 11.500H3V14H0ZM12 1L15 4M15 1L12 4M5 .5H8V3H5Z','#3670a8'),
drad:c(8,8,7,'#666')+p('M8 8L4 4M4 7V4H7',K,0,1.500),
ddia:c(8,8,7,'#666')+p('M4 4L12 12M4 7V4H7M12 9V12H9',K,0,1.500),
dang:p('M0 14.500H15M1 14L9 1M8 3Q13 7 13 12M8 7V3H12M11 9L13 13L15.500 10',K,0,1.300),
qdim:p('M5 2L11 8L14 8L12 15L4 7L7 7Z','#8c7c10','#f4dc28')+p('M.5 0V15M15.500 0V15M.5 4.500H15.500M4 2.500L1 4.500L4 6.500M12 2.500L15 4.500L12 6.500',K),
dbase:p('M1.500 0V15M1 2.500H15M13 1V4M1 9.500H11M11.500 6V15M4 1L2 2.500L4 4M4 8L2 9.500L4 11M9 8L11 9.500L9 11',K),
dcont:p('M.5 0V16M8.500 0V16M15.500 0V16M0 5.500H16M3 3.500L1 5.500L3 7.500M6 3.500L8 5.500L6 7.500M11 3.500L9 5.500L11 7.500M13 3.500L15 5.500L13 7.500',K),
qleader:p('M6 4L11 9L13 9L12 15L4 8L6 8Z','#8c7c10','#f4dc28')+p('M1 6L5 3H10M1 3V6H4',K,0,1.500)+p('M11 5L13 0L15 5M12 3H14',N),
tol:r(.5,3.500,15,9,'#2c5a8c','#c0dcf2')+p('M8.500 3V13M2 8H7M4.500 5V11M11 5V11M13.500 8V11','#2c5a8c')+c(4.500,8,2),
center:c(8,8,7,'#444','#f4f2e6')+p('M5 8H11M8 5V11',K,0,1.500),
dedit:ticks+p('M4.500 8L8 1L11.500 8M6 6H10',N,0,2),
dtedit:ticks+p('M6 10L13 1','#8c6c10',0,3)+p('M6 10L13 1','#f4d030',0,1.500),
dupd:p('M4.500 0V7M15.500 0V10M4 3.500H15','#3670a8')+p('M1.500 4V15M13.500 4V15M1.500 8.500H13.500M4 6.500L2 8.500L4 10.500M11 6.500L13 8.500L11 10.500',K,0,1.300),
dstyle:ticks+p('M15 1L9 7','#777',0,2)+p('M9 6L11 8Q8 12 4 12Q7 10 9 6Z',K,'#222'),
nview:r(.5,3.500,11,10,'#3c6a98','#d4e6f4')+lens(9,4)+r(5.500,7.500,10,8,N,'#fff')+p('M6 9H15',B,0,2),
cbtop:cube('M1.500 5.500L6 1.500H14.500L10.500 5.500Z'),cbbot:cube('M1.500 14.500L6 10.500H14.500L10.500 14.500Z'),
cbleft:cube('M1.500 5.500L6 1.500V10.500L1.500 14.500Z'),cbright:cube('M10.500 5.500L14.500 1.500V10.500L10.500 14.500Z'),
cbfront:cube('M1.500 5.500H10.500V14.500H1.500Z'),cbback:cube('M6 1.500H14.500V10.500H6Z'),
isw:iso('M1.500 6L8 10V15.500L2 11Z'),ise:iso('M8 10L14.500 6L14 11L8 15.500Z'),ine:iso('M8 1L14.500 6L14 11L8 6Z'),inw:iso('M8 1L1.500 6L2 11L8 6Z'),
camera:p('M1 6L5 3L8 6L12 3L15 5V12L10 11L8 13L3 13Z','#222','#555')+c(4.500,9.500,2.500,'#111','#bbb')+c(11.500,8.500,2.500,'#111','#ccc')+p('M6 4H10','#111',0,2),
ucs:axes(),ucsdlg:axes(r(6.500,1.500,9,8,N,'#e4f0fa')+p('M7 3H15',B,0,2)+p('M8 6.500H14',B)),
ucsprev:axes(p('M14 10Q14 3 8 5M10 2L7 5.500L11 8','#333',0,2)),
ucsworld:axes(c(11,5.500,4.500,'#2060a0','#5cb0dc')+p('M9 3Q12 4 10 7M13 3V7','#2c9048',0,2)),
ucsobj:axes(r(7.500,2.500,8,6,N,'#2d6092')),
ucsface:axes(p('M8 4L11 1.500H15.500V5L12.500 8H8Z','#554c10','#f0e468')+p('M8 4H12.500V8M12.500 4L15 2','#554c10')),
ucsview:axes(r(7.500,3.500,8,6,'#3c6a98','#d4e6f4')),
ucsorg:axes(r(1.500,11.500,4,4,K,'#fff')),
ucsz:axes(p('M11 1.500H15L11 6.500H15',K,0,1.500)),
ucs3:axes(p('M11 1.500H14.500L12.500 4Q15 4 14.500 5.500T11 6.500',K,0,1.300)),
};
const svg=n=>`<svg class="size-4" viewBox="0 0 16 16" fill="none">${I[n]||''}</svg>`;
const H={h:'flex items-center border-r border-[#aca899] pr-1',g:'flex items-center',n:'flex items-center border-r border-[#aca899] pr-[5px]',v:'flex flex-col items-center w-6 border-r border-b border-[#aca899] pb-1'};
document.querySelectorAll('[data-bar]').forEach(e=>{
  const k=e.dataset.bar;
  e.className=H[k];
  let h='';
  if(k==='h'||k==='g')h+='<span class="flex gap-[1px] w-[13px] h-full py-[3px] pl-[3px]"><span class="w-[3px] border-l border-l-white border-r border-r-[#aca899]"></span><span class="w-[3px] border-l border-l-white border-r border-r-[#aca899]"></span></span>';
  if(k==='v')h+='<span class="flex flex-col gap-[1px] w-full h-[9px] px-[3px] pt-[1px]"><span class="h-[3px] border-t border-t-white border-b border-b-[#aca899]"></span><span class="h-[3px] border-t border-t-white border-b border-b-[#aca899]"></span></span>';
  e.dataset.icons.split(' ').filter(Boolean).forEach(n=>{
    if(n==='|')h+=k==='v'?'<span class="h-[6px] w-full px-[3px] flex items-center"><span class="w-full border-t border-[#aca899] border-b border-b-white"></span></span>':'<span class="w-[6px] h-full py-1 flex justify-center"><span class="h-full border-l border-[#aca899] border-r border-r-white"></span></span>';
    else if(n==='dd')h+='<button aria-label="Undo list" class="w-3"><svg viewBox="0 0 12 12"><path d="M4 5H9L6.500 8Z" fill="#111"/></svg></button>';
    else if(n==='ddg')h+='<button aria-label="Redo list" class="w-[13px]"><svg viewBox="0 0 13 12"><path d="M4 5H9L6.500 8Z" fill="#b8b5a8"/></svg></button>';
    else h+=`<button aria-label="${n}" class="w-[23px] h-[22px] shrink-0 flex items-center justify-center">${svg(n)}</button>`;
  });
  e.innerHTML=h;
});
const A={up:'M4 10L8 6L12 10',down:'M4 6L8 10L12 6',left:'M10 4L6 8L10 12',right:'M6 4L10 8L6 12',gripv:'M4 4.500H12M4 6.500H12M4 8.500H12M4 10.500H12',griph:'M4.500 4V12M6.500 4V12M8.500 4V12M10.500 4V12'};
document.querySelectorAll('[data-arrow]').forEach(e=>{
  const a=e.dataset.arrow,g=a.startsWith('grip');
  e.className='block size-4 shrink-0';
  e.innerHTML=`<svg viewBox="0 0 16 16"><rect x=".5" y=".5" width="15" height="15" rx="2" fill="#c4d4fb" stroke="#a9bff0"/><path d="${A[a]}" fill="none" stroke="${g?'#8ba4e0':'#4d6185'}" stroke-width="${g?1:2}"/></svg>`;
});
</script>
</body>
</html>
